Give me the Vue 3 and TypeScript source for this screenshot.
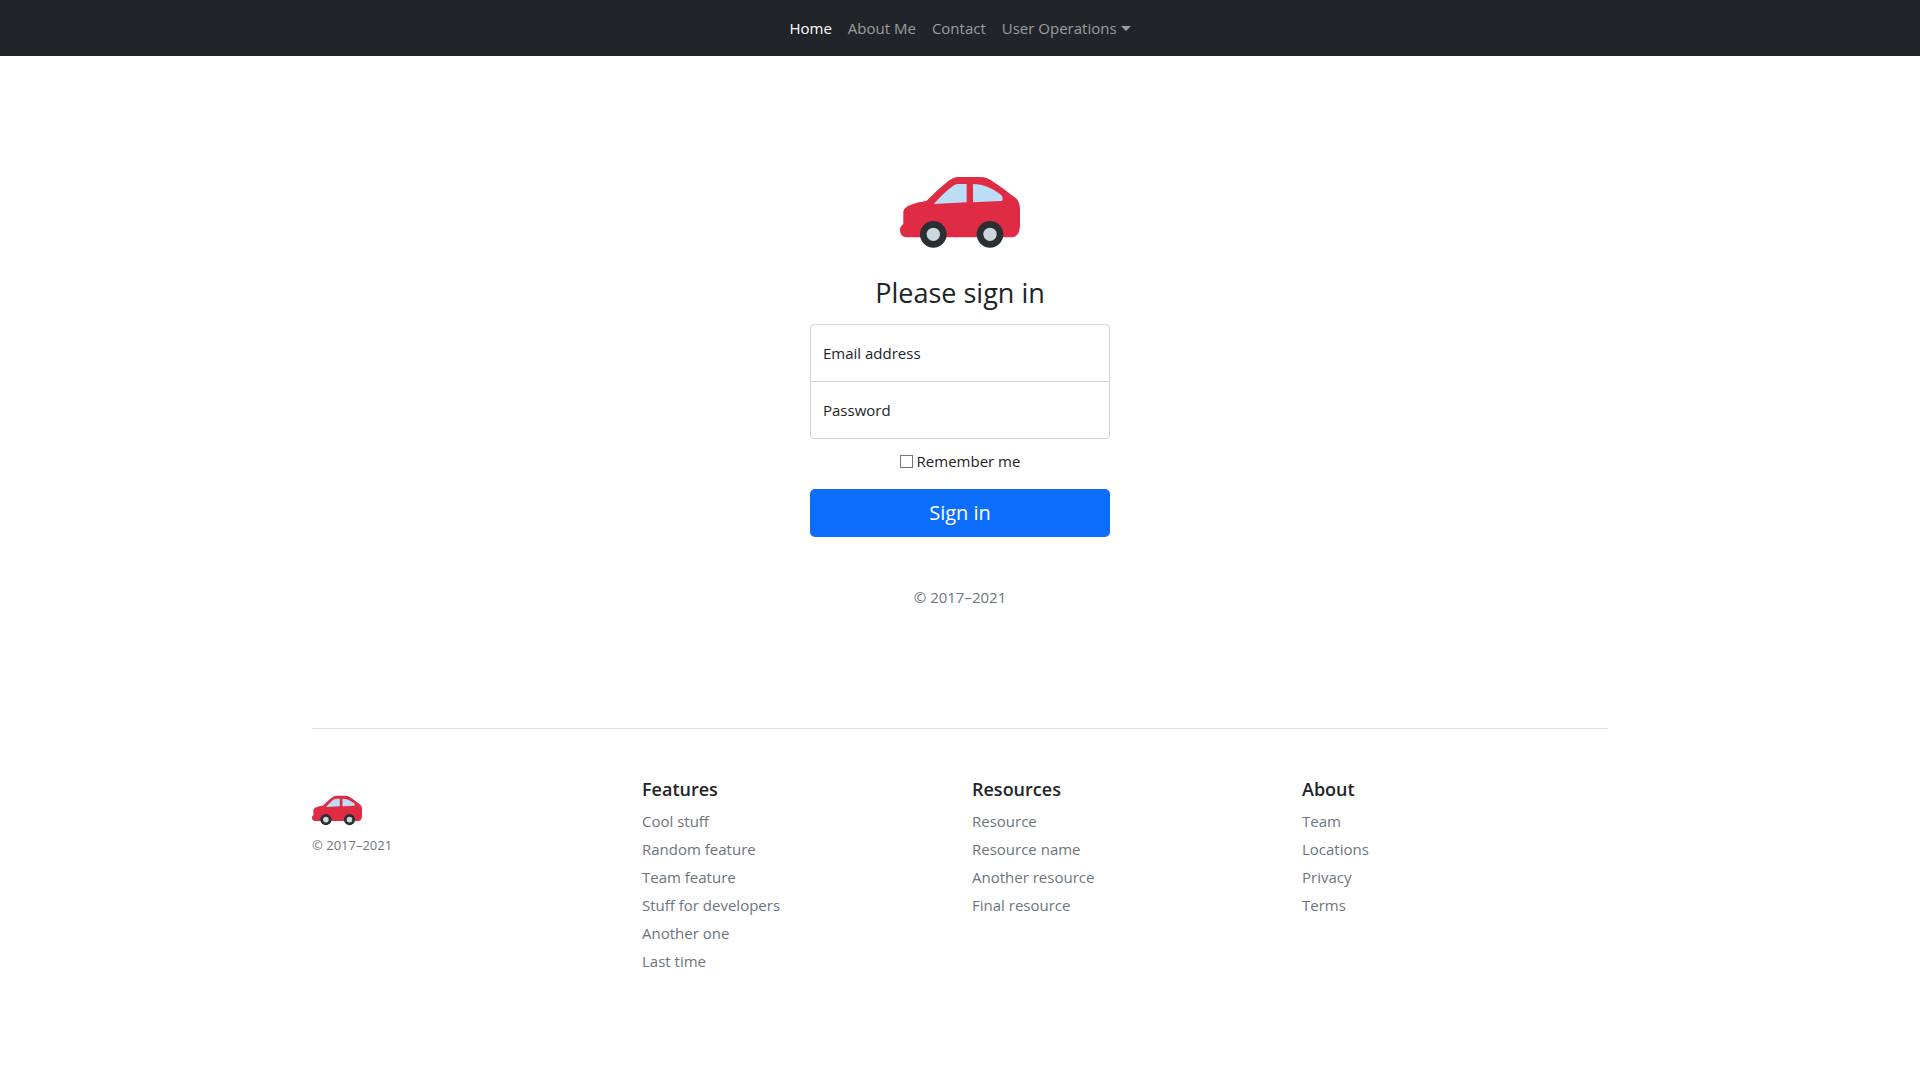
<script setup lang="ts">
import { ref, h } from 'vue'

interface NavItem {
  label: string
  active?: boolean
  dropdown?: boolean
}

interface LinkGroup {
  title: string
  links: string[]
}

const navItems: NavItem[] = [
  { label: 'Home', active: true },
  { label: 'About Me' },
  { label: 'Contact' },
  { label: 'User Operations', dropdown: true },
]

const groups: LinkGroup[] = [
  {
    title: 'Features',
    links: ['Cool stuff', 'Random feature', 'Team feature', 'Stuff for developers', 'Another one', 'Last time'],
  },
  { title: 'Resources', links: ['Resource', 'Resource name', 'Another resource', 'Final resource'] },
  { title: 'About', links: ['Team', 'Locations', 'Privacy', 'Terms'] },
]

const email = ref('')
const password = ref('')
const remember = ref(false)

const CarLogo = () =>
  h('svg', { viewBox: '0 0 36 36', 'aria-hidden': 'true' }, [
    h('path', {
      fill: '#df2b43',
      d: 'M18 9.900h6.200c1 0 2 .3 3 .9 2.400 1.500 5.300 3.700 7.600 5.500.7.600 1.200 1.700 1.200 3.200v4.500c0 2.600-.8 4-2.600 4H2c-1.200 0-2-.9-2-2.100 0-.9.4-1.500 1-1.900v-3.400C1 18.400 4.500 17.700 8 17c2-1.900 4.300-4.200 6.400-5.800 1.200-.9 2-1.300 3.600-1.300z',
    }),
    h('path', {
      fill: '#bbddf5',
      d: 'M20 12v5.500l-9.900.5c1.900-2 3.900-4.200 5.900-5.500.6-.4 1.100-.5 1.700-.5zM21.900 12c3.200 0 5.900 1.400 8.200 3.100.5.4.7.8.7 1.300s-.2.700-.6.700l-8.300.400z',
    }),
    ...[10, 27].flatMap((cx) => [
      h('circle', { cx, cy: 27.1, r: 4, fill: '#292f33' }),
      h('circle', { cx, cy: 27.1, r: 2, fill: '#ccd6dd' }),
    ]),
  ])
</script>

<template>
  <div class="page">
    <nav class="navbar">
      <ul class="nav-list">
        <li v-for="item in navItems" :key="item.label">
          <a href="#" class="nav-link" :class="{ active: item.active, dropdown: item.dropdown }">{{ item.label }}</a>
        </li>
      </ul>
    </nav>

    <main class="signin">
      <form @submit.prevent>
        <CarLogo class="logo" />
        <h1>Please sign in</h1>
        <div class="field">
          <input id="email" v-model="email" type="email" class="first" />
          <label v-show="!email" for="email">Email address</label>
        </div>
        <div class="field">
          <input id="password" v-model="password" type="password" class="last" />
          <label v-show="!password" for="password">Password</label>
        </div>
        <label class="remember">
          <input v-model="remember" type="checkbox" />
          <span>Remember me</span>
        </label>
        <button type="submit">Sign in</button>
        <p class="copyright">© 2017–2021</p>
      </form>
    </main>

    <footer class="footer">
      <div class="brand">
        <CarLogo class="small-logo" />
        <small>© 2017–2021</small>
      </div>
      <section v-for="group in groups" :key="group.title">
        <h2>{{ group.title }}</h2>
        <ul>
          <li v-for="link in group.links" :key="link">
            <a href="#">{{ link }}</a>
          </li>
        </ul>
      </section>
    </footer>
  </div>
</template>

<style>
body {
  margin: 0;
  background: #fff;
}
</style>

<style scoped>
.page {
  font-family: 'Segoe UI', 'Open Sans', 'Noto Sans', sans-serif;
  font-size: 15px;
  line-height: 24px;
  color: #212529;
}

.page *,
.page *::before,
.page *::after {
  box-sizing: border-box;
}

ul {
  list-style: none;
  margin: 0;
  padding: 0;
}

a {
  text-decoration: none;
}

.navbar {
  padding: 8px;
  background: #212529;
}

.nav-list {
  display: flex;
  justify-content: center;
}

.nav-link {
  display: flex;
  align-items: center;
  gap: 4px;
  padding: 8px;
  color: #9b9d9f;
}

.nav-link.active {
  color: #fff;
}

.nav-link.dropdown::after {
  content: '';
  border-top: 5px solid;
  border-right: 5px solid transparent;
  border-left: 5px solid transparent;
}

.signin {
  max-width: 330px;
  margin: 0 auto;
  padding: 88px 15px 119px;
  text-align: center;
}

.logo {
  display: block;
  width: 120px;
  height: 120px;
  margin: 0 auto 12px;
}

h1 {
  margin: 0 0 14px;
  font-size: 27px;
  font-weight: 400;
  line-height: 34px;
}

.field {
  position: relative;
}

.field input {
  display: block;
  width: 100%;
  height: 58px;
  padding: 16px 12px;
  border: 1px solid #ced4da;
  background: #fff;
  font: inherit;
  color: inherit;
}

.field .first {
  margin-bottom: -1px;
  border-radius: 4px 4px 0 0;
}

.field .last {
  border-radius: 0 0 4px 4px;
}

.field label {
  position: absolute;
  top: 17px;
  left: 13px;
}

.remember {
  display: flex;
  justify-content: center;
  align-items: center;
  gap: 4px;
  margin: 10px 0 16px;
}

.remember input {
  appearance: none;
  width: 13px;
  height: 13px;
  margin: 0;
  border: 1px solid #767676;
  background: #fff;
}

.remember input:checked {
  background: #0d6efd;
}

button {
  display: block;
  width: 100%;
  height: 48px;
  padding: 8px 16px;
  border: 0;
  border-radius: 5px;
  background: #0d6efd;
  color: #fff;
  font: inherit;
  font-size: 20px;
  line-height: 32px;
  cursor: pointer;
}

.copyright {
  margin: 48px 0 0;
  color: #6c757d;
}

.footer {
  display: grid;
  grid-template-columns: repeat(4, 1fr);
  column-gap: 24px;
  max-width: 1296px;
  margin: 0 auto;
  padding: 48px 0;
  border-top: 1px solid #dee2e6;
}

.small-logo {
  display: block;
  width: 50px;
  height: 50px;
  margin: 5px 0 1px;
}

.brand small {
  display: block;
  font-size: 13px;
  color: #6c757d;
}

h2 {
  margin: 0 0 8px;
  font-size: 18px;
  font-weight: 600;
  line-height: 24px;
}

li a {
  color: #6c757d;
}

section li {
  margin-bottom: 4px;
}
</style>
